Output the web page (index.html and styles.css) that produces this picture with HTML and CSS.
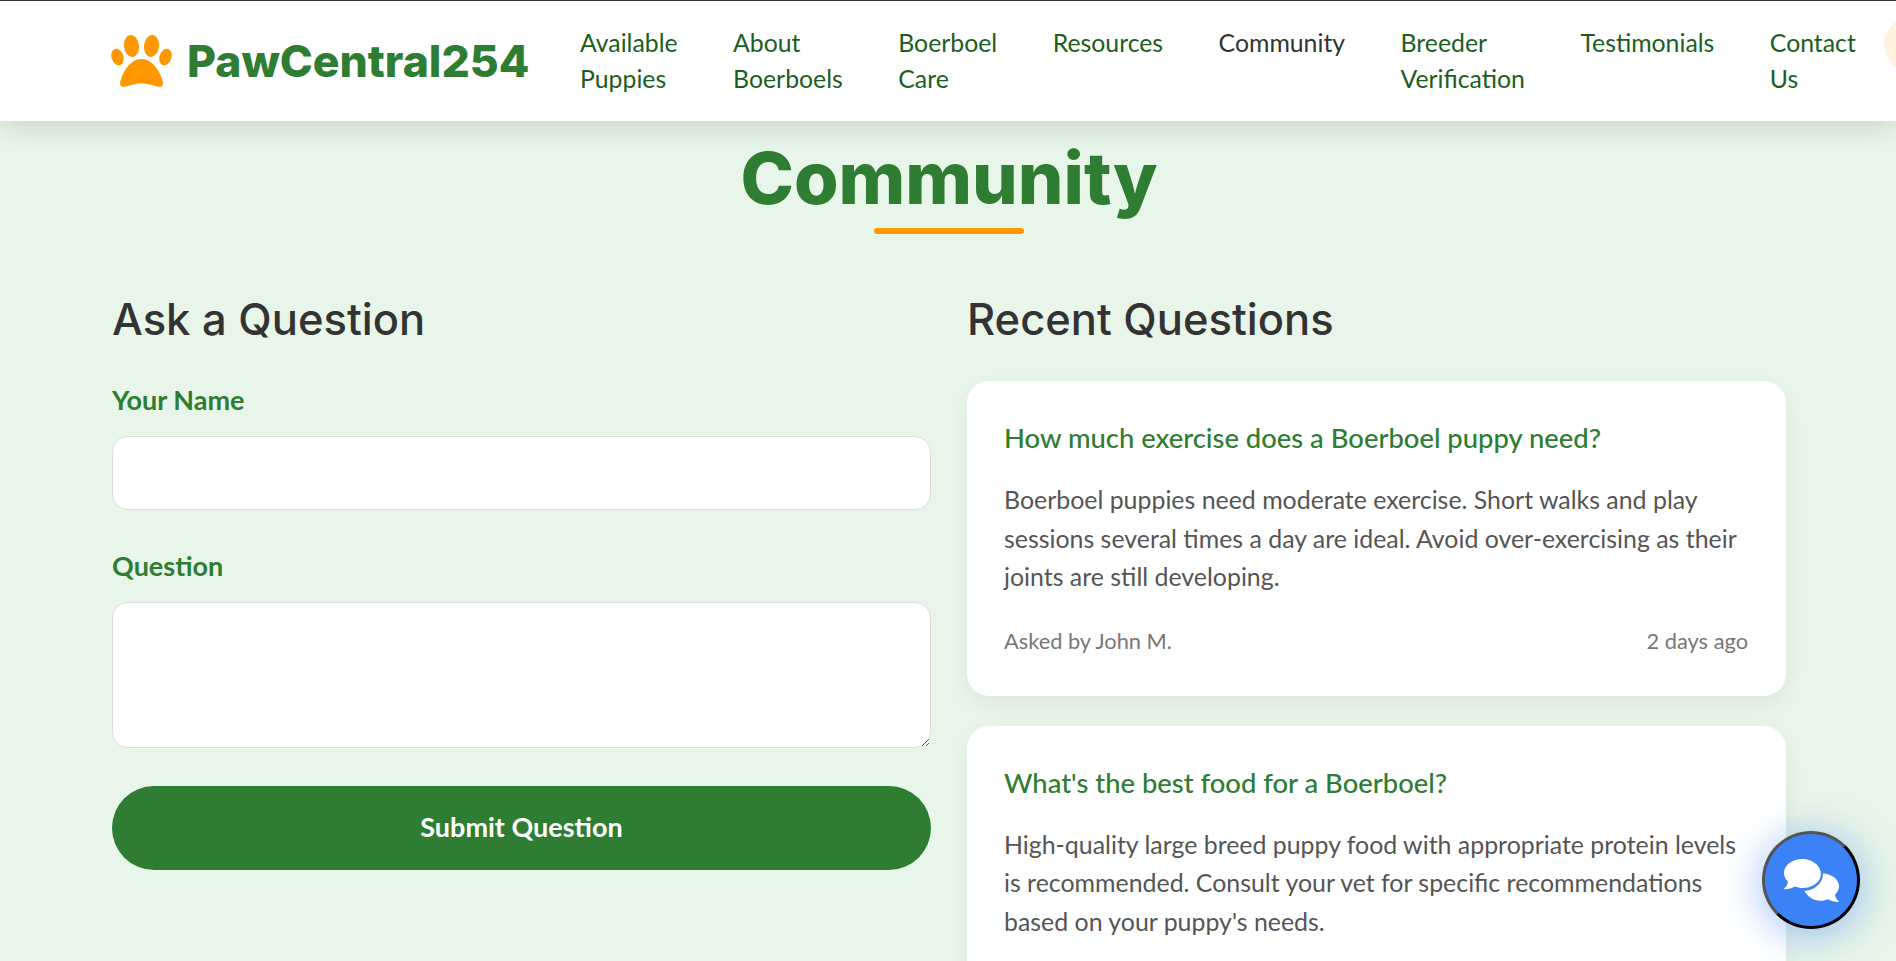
FILE: index.html
```html
<!DOCTYPE html>
<html lang="en">
<head>
    <meta charset="UTF-8">
    <meta name="viewport" content="width=device-width, initial-scale=1.0">
    <title>Community - PawCentral254</title>
    <link rel="stylesheet" href="styles.css">
</head>
<body>
    <header class="site-header">
        <a class="logo" href="#">
            <svg class="logo-paw" viewBox="0 0 61 52" aria-hidden="true">
                <ellipse cx="6.500" cy="22" rx="6" ry="8.500" transform="rotate(-18 6.500 22)"/>
                <ellipse cx="20.500" cy="11" rx="7.500" ry="11" transform="rotate(-6 20.500 11)"/>
                <ellipse cx="40.500" cy="11" rx="7.500" ry="11" transform="rotate(6 40.500 11)"/>
                <ellipse cx="54.500" cy="22" rx="6" ry="8.500" transform="rotate(18 54.500 22)"/>
                <path d="M30.500 24C22 24 16 31 12 39 9.500 45 8 49 10 51c2 2 7 0 12-1.500 5-1.500 12-1.500 17 0 5 1.500 10 3.500 12 1.500 2-2 .5-6-2-12C45 31 39 24 30.500 24z"/>
            </svg>
            <span class="logo-text">PawCentral254</span>
        </a>
        <nav class="nav-links">
            <a href="#">Available Puppies</a>
            <a href="#">About Boerboels</a>
            <a href="#">Boerboel Care</a>
            <a href="#">Resources</a>
            <a href="#" class="active">Community</a>
            <a href="#">Breeder Verification</a>
            <a href="#">Testimonials</a>
            <a href="#">Contact Us</a>
        </nav>
        <div class="account-circle">A</div>
    </header>

    <main class="page">
        <h1 class="page-title">Community</h1>
        <div class="columns">
            <section>
                <h2>Ask a Question</h2>
                <form class="ask-form">
                    <div class="form-group">
                        <label for="name">Your Name</label>
                        <input id="name" type="text">
                    </div>
                    <div class="form-group">
                        <label for="question">Question</label>
                        <textarea id="question"></textarea>
                    </div>
                    <button class="submit-btn" type="button">Submit Question</button>
                </form>
            </section>
            <section>
                <h2>Recent Questions</h2>
                <article class="question-card">
                    <h3>How much exercise does a Boerboel puppy need?</h3>
                    <p>Boerboel puppies need moderate exercise. Short walks and play sessions several times a day are ideal. Avoid over-exercising as their joints are still developing.</p>
                    <div class="question-meta">
                        <span>Asked by John M.</span>
                        <span>2 days ago</span>
                    </div>
                </article>
                <article class="question-card">
                    <h3>What's the best food for a Boerboel?</h3>
                    <p>High-quality large breed puppy food with appropriate protein levels is recommended. Consult your vet for specific recommendations based on your puppy's needs.</p>
                    <div class="question-meta">
                        <span>Asked by Sarah K.</span>
                        <span>1 week ago</span>
                    </div>
                </article>
            </section>
        </div>
    </main>

    <button class="chat-btn" type="button" aria-label="Open chat">
        <svg viewBox="0 0 55 43" aria-hidden="true">
            <path d="M18.500 0C8.300 0 0 6.300 0 14c0 3.300 1.500 6.300 4 8.700-.4 2.400-1.500 4.800-3.600 6.500-.5.400-.2 1 .5 1 3.500 0 7-1 9.800-2.700 2.500.9 5 1.500 7.800 1.500 10.200 0 18.500-6.300 18.500-14S28.700 0 18.500 0z"/>
            <path d="M20.500 31.800C30 31.500 39.500 24 39 14.200 48 15 55 20.500 55 27c0 3.300-1.500 6.300-4 8.700.4 2.400 1.500 4.700 3.600 6.400.5.400.2.9-.5.9-3.500 0-7-1-9.800-2.700-2.500.9-5 1.500-7.800 1.500-7 0-13-4-16-10z"/>
        </svg>
    </button>
</body>
</html>
```

FILE: styles.css
```css
* {
    box-sizing: border-box;
}
html, body {
    overflow-x: hidden;
}
body {
    margin: 0;
    font-family: "Lato", "Open Sans", sans-serif;
    background-color: #e8f5e9;
    color: #333;
    border-top: 1px solid #333;
}
.site-header {
    position: relative;
    z-index: 5;
    display: flex;
    align-items: center;
    width: 100%;
    height: 120px;
    padding-left: 111px;
    background: #fff;
    box-shadow: 0 4px 30px rgba(0, 0, 0, 0.15);
}
.logo {
    display: flex;
    align-items: center;
    flex-shrink: 0;
    gap: 15px;
    width: 469px;
    text-decoration: none;
}
.logo-paw {
    width: 61px;
    height: 52px;
    fill: #ff9800;
}
.logo-text {
    font-family: "Inter", sans-serif;
    font-size: 44.500px;
    font-weight: 800;
    color: #2e7d32;
}
.nav-links {
    display: flex;
    flex-shrink: 0;
    align-items: flex-start;
    gap: 55.500px;
    padding-bottom: 1px;
}
.nav-links a {
    display: block;
    width: min-content;
    font-size: 24.800px;
    line-height: 36px;
    color: #1b5e20;
    text-decoration: none;
}
.nav-links a.active {
    color: #333;
}
.account-circle {
    flex-shrink: 0;
    align-self: flex-start;
    width: 55px;
    height: 55px;
    margin-top: 16px;
    margin-left: 28px;
    padding-left: 12px;
    border-radius: 50%;
    background: #fff3e0;
    color: #ff9800;
    font-size: 24px;
    font-weight: 700;
    line-height: 55px;
}
.page {
    padding: 0 110px 0 112px;
}
.page-title {
    position: relative;
    margin: 0 0 60px;
    padding: 15px 0 13px;
    font-family: "Inter", sans-serif;
    font-size: 72px;
    font-weight: 800;
    line-height: 84px;
    color: #2e7d32;
    text-align: center;
}
.page-title::after {
    content: "";
    position: absolute;
    left: 50%;
    bottom: -1px;
    width: 150px;
    height: 6px;
    margin-left: -75px;
    border-radius: 3px;
    background: #ff9800;
}
.columns {
    display: grid;
    grid-template-columns: 1fr 1fr;
    gap: 36px;
}
h2 {
    margin: 0 0 36px;
    font-family: "Inter", sans-serif;
    font-size: 43.500px;
    font-weight: 500;
    line-height: 52px;
    color: #333;
}
.ask-form {
    padding-top: 2px;
}
.form-group {
    margin-bottom: 38.500px;
}
label {
    display: block;
    margin-bottom: 19px;
    font-size: 27px;
    font-weight: 700;
    line-height: 34px;
    color: #2e7d32;
}
input, textarea {
    display: block;
    width: 100%;
    border: 1px solid #ddd;
    border-radius: 16px;
    background: #fff;
}
input {
    height: 74px;
}
textarea {
    height: 146px;
}
.submit-btn {
    display: block;
    width: 100%;
    height: 84px;
    padding: 0 0 3px;
    border: none;
    border-radius: 42px;
    background: #2e7d32;
    color: #fff;
    font-family: inherit;
    font-size: 27px;
    font-weight: 700;
}
.question-card {
    margin-bottom: 30px;
    padding: 38px 38px 38px 37px;
    border-radius: 22px;
    background: #fff;
    box-shadow: 0 8px 24px rgba(0, 0, 0, 0.06);
}
.question-card h3 {
    margin: 0 0 23px;
    font-size: 27.400px;
    font-weight: 500;
    line-height: 38px;
    color: #2e7d32;
}
.question-card p {
    margin: 0 0 28px;
    font-size: 24.900px;
    line-height: 38.500px;
    color: #555;
}
.question-meta {
    display: flex;
    justify-content: space-between;
    font-size: 21.800px;
    line-height: 34px;
    color: #777;
}
.chat-btn {
    position: fixed;
    right: 36px;
    bottom: 32px;
    z-index: 10;
    display: flex;
    align-items: center;
    justify-content: center;
    width: 98px;
    height: 98px;
    padding: 0;
    border: 3px outset #000;
    border-radius: 50%;
    background: #3b82f6;
    box-shadow: 0 5px 40px rgba(59, 130, 246, 0.5);
}
.chat-btn svg {
    width: 55px;
    height: 43px;
    fill: #fff;
}
```
